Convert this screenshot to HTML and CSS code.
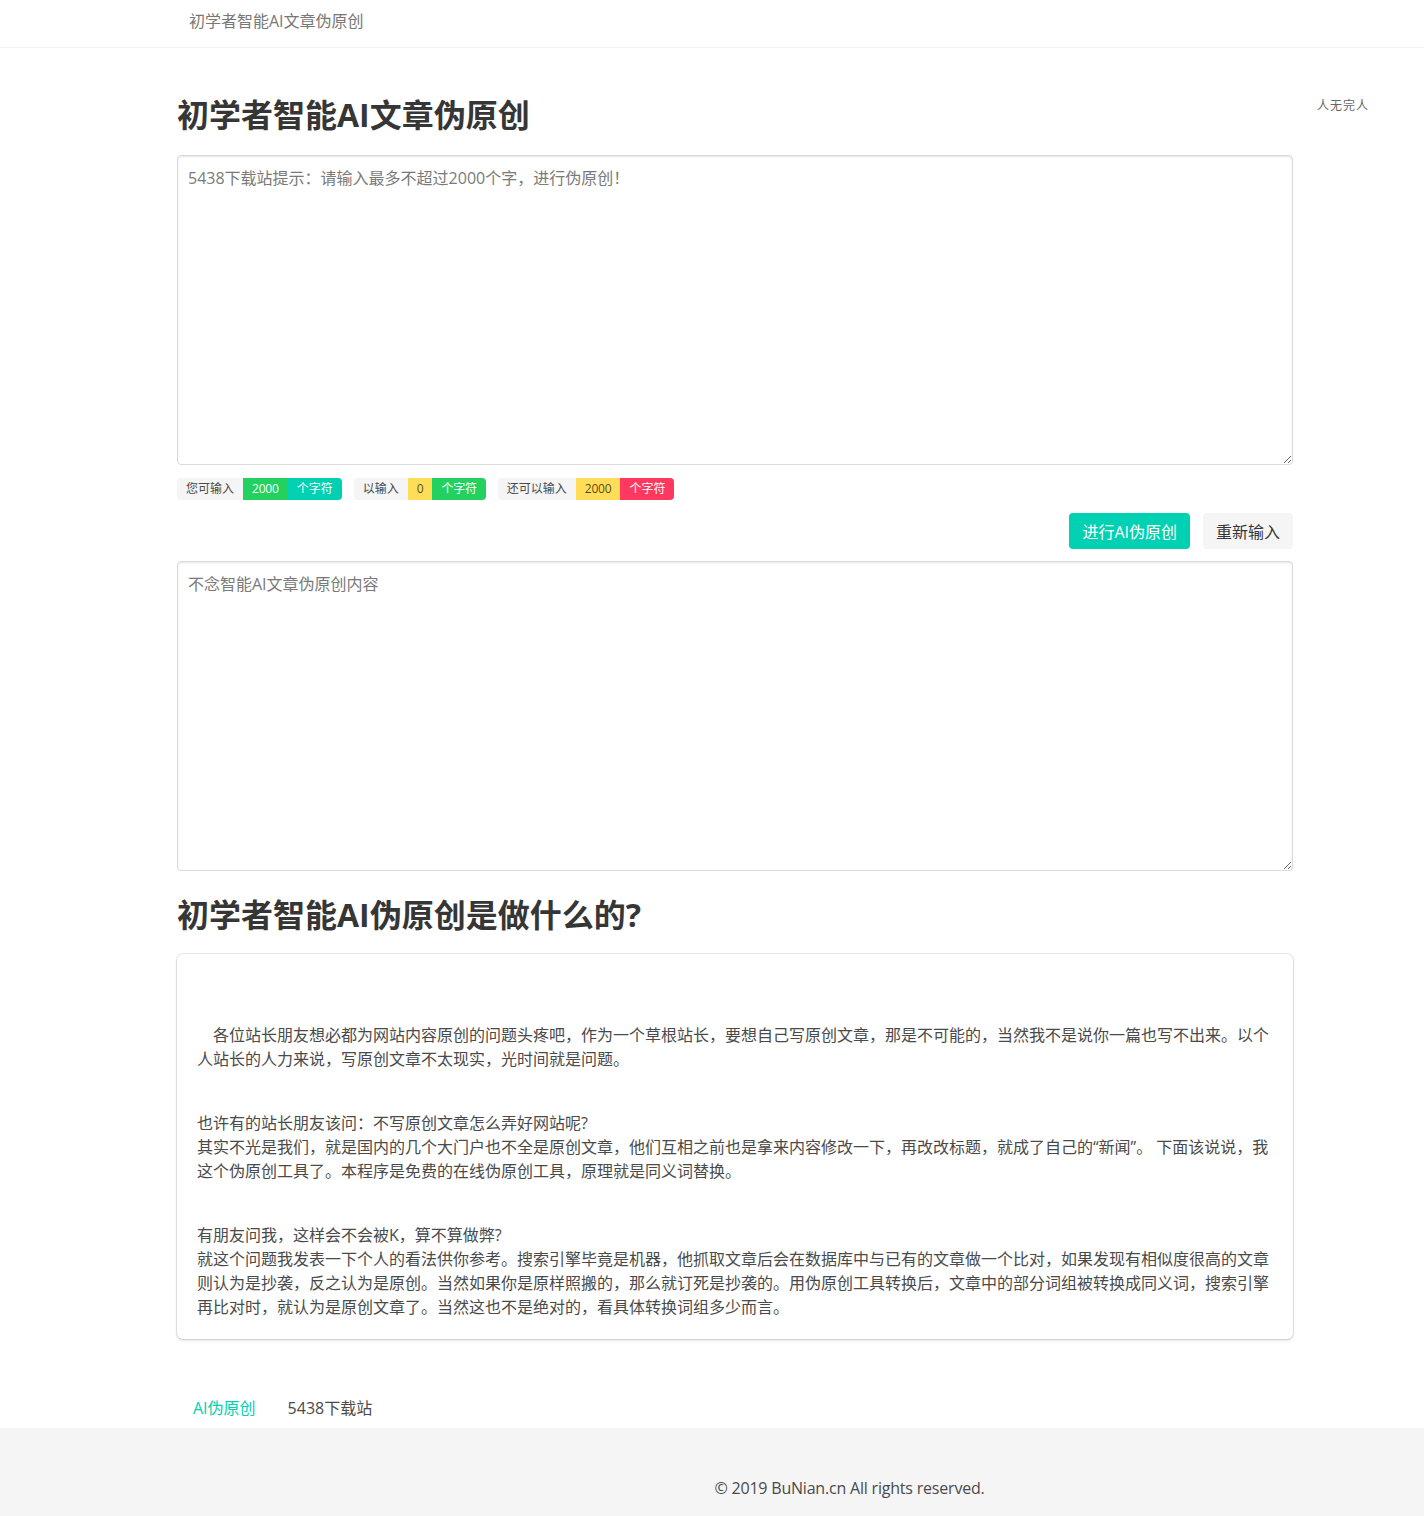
FILE: index.html
```
<!DOCTYPE html>
<html lang="zh-CN">
<head>
    <meta charset="UTF-8">
    <meta name="viewport" content="width=device-width, initial-scale=1.0">
    <title>初学者智能AI文章伪原创</title>
    <link rel="stylesheet" href="styles.css">
</head>
<body>

    <!-- Top bar -->
    <nav class="navbar">
        <a class="navbar-item" href="#">初学者智能AI文章伪原创</a>
    </nav>

    <div class="page">
        <!-- Main column -->
        <section class="main">
            <h1 class="title">初学者智能AI文章伪原创</h1>

            <textarea id="source" class="textarea" placeholder="5438下载站提示：请输入最多不超过2000个字，进行伪原创！"></textarea>

            <div class="tag-row">
                <div class="tags">
                    <span class="tag is-light">您可输入</span>
                    <span class="tag is-success">2000</span>
                    <span class="tag is-primary">个字符</span>
                </div>
                <div class="tags">
                    <span class="tag is-light">以输入</span>
                    <span class="tag is-warning" id="used-count">0</span>
                    <span class="tag is-success">个字符</span>
                </div>
                <div class="tags">
                    <span class="tag is-light">还可以输入</span>
                    <span class="tag is-warning" id="left-count">2000</span>
                    <span class="tag is-danger">个字符</span>
                </div>
            </div>

            <div class="buttons">
                <button class="button is-primary" onclick="rewrite()">进行AI伪原创</button>
                <button class="button is-light" onclick="resetInput()">重新输入</button>
            </div>

            <textarea id="result" class="textarea" placeholder="不念智能AI文章伪原创内容"></textarea>

            <h2 class="title">初学者智能AI伪原创是做什么的?</h2>

            <div class="box intro">
                <p class="indent">各位站长朋友想必都为网站内容原创的问题头疼吧，作为一个草根站长，要想自己写原创文章，那是不可能的，当然我不是说你一篇也写不出来。以个人站长的人力来说，写原创文章不太现实，光时间就是问题。</p>
                <p>也许有的站长朋友该问：不写原创文章怎么弄好网站呢?<br>其实不光是我们，就是国内的几个大门户也不全是原创文章，他们互相之前也是拿来内容修改一下，再改改标题，就成了自己的“新闻”。 下面该说说，我这个伪原创工具了。本程序是免费的在线伪原创工具，原理就是同义词替换。</p>
                <p>有朋友问我，这样会不会被K，算不算做弊?<br>就这个问题我发表一下个人的看法供你参考。搜索引擎毕竟是机器，他抓取文章后会在数据库中与已有的文章做一个比对，如果发现有相似度很高的文章则认为是抄袭，反之认为是原创。当然如果你是原样照搬的，那么就订死是抄袭的。用伪原创工具转换后，文章中的部分词组被转换成同义词，搜索引擎再比对时，就认为是原创文章了。当然这也不是绝对的，看具体转换词组多少而言。</p>
            </div>

            <!-- Links -->
            <div class="tabs">
                <a class="is-active" href="#">AI伪原创</a>
                <a href="#">5438下载站</a>
            </div>
        </section>

        <aside class="side">
            <span class="motto">人无完人</span>
        </aside>
    </div>

    <footer class="footer">
        <p>© 2019 BuNian.cn All rights reserved.</p>
    </footer>

    <script>
        const source = document.getElementById("source");

        source.addEventListener("input", () => {
            const used = source.value.length;
            document.getElementById("used-count").innerText = used;
            document.getElementById("left-count").innerText = Math.max(0, 2000 - used);
        });

        function rewrite() {
            document.getElementById("result").value = source.value;
        }

        function resetInput() {
            source.value = "";
            document.getElementById("result").value = "";
            document.getElementById("used-count").innerText = 0;
            document.getElementById("left-count").innerText = 2000;
        }
    </script>

</body>
</html>
```

FILE: styles.css
```
/* General styles */
body {
    font-family: "Open Sans", "Noto Sans CJK SC", sans-serif;
    font-size: 16px;
    line-height: 1.5;
    margin: 0;
    padding: 0;
    color: #4a4a4a;
    background-color: #fff;
}

a {
    text-decoration: none;
}

/* Top bar */
.navbar {
    height: 47px;
    border-bottom: 1px solid #f2f2f2;
    display: flex;
    align-items: center;
    padding-left: 177px;
}

.navbar-item {
    color: #777;
    font-size: 16px;
    padding: 0 12px;
    margin-top: -5px;
}

/* Page columns */
.page {
    display: flex;
}

.main {
    width: 1116px;
    margin-left: 177px;
    padding-top: 49px;
}

.side {
    flex: 1;
    display: flex;
    justify-content: flex-end;
    padding: 49px 55px 0 0;
}

.motto {
    font-size: 12px;
    color: #666;
    letter-spacing: 1px;
}

.title {
    margin: 0;
    font-size: 32px;
    font-weight: 700;
    line-height: 36px;
    color: #363636;
}

h1.title {
    margin-bottom: 22px;
}

h2.title {
    margin: 26px 0 21px;
}

/* Text areas */
.textarea {
    display: block;
    box-sizing: border-box;
    width: 100%;
    height: 310px;
    padding: 10px;
    font-family: inherit;
    font-size: 16px;
    line-height: 24px;
    color: #363636;
    border: 1px solid #dbdbdb;
    border-radius: 4px;
    box-shadow: inset 0 1px 2px rgba(10, 10, 10, 0.1);
    resize: vertical;
}

.textarea::placeholder {
    color: #7a7a7a;
}

/* Counters */
.tag-row {
    display: flex;
    gap: 12px;
    margin: 13px 0;
}

.tags {
    display: flex;
}

.tag {
    height: 22px;
    line-height: 22px;
    padding: 0 9px;
    font-size: 12px;
    color: #fff;
}

.tag.is-success,
.tag.is-warning {
    letter-spacing: -0.2px;
}

.tags .tag:first-child {
    border-radius: 4px 0 0 4px;
}

.tags .tag:last-child {
    border-radius: 0 4px 4px 0;
}

.tag.is-light {
    background-color: #f5f5f5;
    color: #4a4a4a;
}

.tag.is-success {
    background-color: #23d160;
}

.tag.is-primary {
    background-color: #00d1b2;
}

.tag.is-warning {
    background-color: #ffdd57;
    color: rgba(0, 0, 0, 0.7);
}

.tag.is-danger {
    background-color: #ff3860;
}

/* Buttons */
.buttons {
    display: flex;
    justify-content: flex-end;
    gap: 13px;
    margin-bottom: 12px;
}

.button {
    height: 36px;
    padding: 0 12px;
    font-family: inherit;
    font-size: 16px;
    border: 1px solid transparent;
    border-radius: 4px;
    cursor: pointer;
}

.button.is-primary {
    background-color: #00d1b2;
    color: #fff;
}

.button.is-light {
    background-color: #f5f5f5;
    color: #363636;
}

/* About box */
.box {
    background-color: #fff;
    border-radius: 6px;
    padding: 20px;
    box-shadow: 0 2px 3px rgba(10, 10, 10, 0.1), 0 0 0 1px rgba(10, 10, 10, 0.1);
}

.intro p {
    margin: 40px 0 0;
}

.intro p:first-child {
    margin-top: 49px;
}

.intro .indent {
    text-indent: 16px;
}

/* Links */
.tabs {
    display: flex;
    margin-top: 49px;
}

.tabs a {
    padding: 8px 16px;
    color: #4a4a4a;
}

.tabs a.is-active {
    color: #00d1b2;
}

/* Footer */
.footer {
    background-color: #f5f5f5;
    padding: 48px 0 17px 275px;
    text-align: center;
}

.footer p {
    margin: 0;
    letter-spacing: -0.2px;
}
```
